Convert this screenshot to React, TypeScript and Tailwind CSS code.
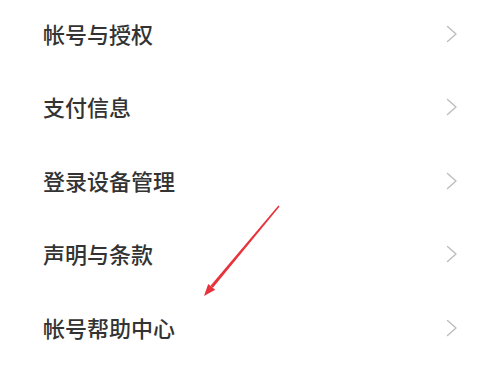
import React from "react";

const items = ["帐号与授权", "支付信息", "登录设备管理", "声明与条款", "帐号帮助中心"];

function Chevron() {
  return (
    <svg width="12" height="18" viewBox="0 0 12 18" fill="none">
      <path d="M1.5 1.5 L10 9 L1.5 16.5" stroke="#bdbdbd" strokeWidth="1.4" strokeLinecap="round" strokeLinejoin="round" />
    </svg>
  );
}

export default function App() {
  return (
    <div
      className="relative w-[500px] h-[375px] bg-white overflow-hidden"
      style={{ fontFamily: '"Noto Sans CJK SC", "Noto Sans", sans-serif' }}
    >
      <div className="flex flex-col -mt-[3px]">
        {items.map((t) => (
          <div key={t} className="h-[73.5px] flex items-center justify-between pl-[43px] pr-[42px]">
            <span className="text-[22px] leading-none font-medium text-[#333333] -translate-y-[1px]">{t}</span>
            <Chevron />
          </div>
        ))}
      </div>
      <svg className="absolute left-0 top-0 pointer-events-none" width="500" height="375" viewBox="0 0 500 375">
        <polygon points="279.6,206.5 278.4,205.5 210.5,285.8 212.9,287.8" fill="#e8323c" />
        <polygon points="204,296 215.2,289.7 208.2,283.9" fill="#e8323c" />
      </svg>
    </div>
  );
}
